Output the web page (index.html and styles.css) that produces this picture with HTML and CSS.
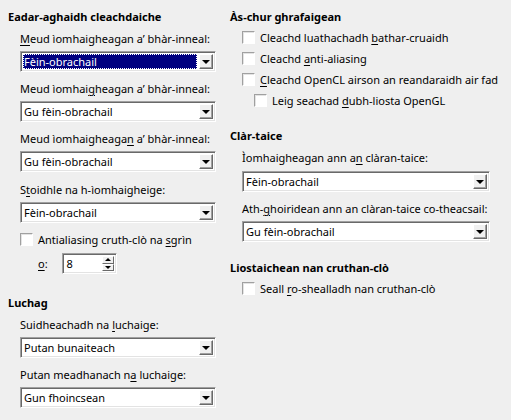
FILE: index.html
```html
<!DOCTYPE html>
<html>
<head>
<meta charset="utf-8">
<link rel="stylesheet" href="styles.css">
</head>
<body>
<div class="page">
  <div class="col col-left">
    <section class="group">
      <h3 class="heading">Eadar-aghaidh cleachdaiche</h3>
      <div class="body">
        <div class="label"><u>M</u>eud ìomhaigheagan a’ bhàr-inneal:</div>
        <div class="combo focused"><span class="value"><span class="sel">Fèin-obrachail</span></span><span class="btn"><span class="arrow"></span></span></div>
        <div class="label">Meud ìomhai<u>g</u>heagan a’ bhàr-inneal:</div>
        <div class="combo"><span class="value">Gu fèin-obrachail</span><span class="btn"><span class="arrow"></span></span></div>
        <div class="label">Meud ìomhaigheaga<u>n</u> a’ bhàr-inneal:</div>
        <div class="combo"><span class="value">Gu fèin-obrachail</span><span class="btn"><span class="arrow"></span></span></div>
        <div class="label style-label">S<u>t</u>oidhle na h-ìomhaigheige:</div>
        <div class="combo"><span class="value">Fèin-obrachail</span><span class="btn"><span class="arrow"></span></span></div>
        <div class="check"><span class="box"></span><span>Antialiasing cruth-clò na <u>s</u>grìn</span></div>
        <div class="spinrow">
          <span class="spinlabel"><u>o</u>:</span>
          <div class="spin"><span class="value">8</span><span class="spinbtns"><span class="sbtn"><span class="up"></span></span><span class="sbtn"><span class="down"></span></span></span></div>
        </div>
      </div>
    </section>
    <section class="group mouse">
      <h3 class="heading">Luchag</h3>
      <div class="body">
        <div class="label">Suidheachadh na <u>l</u>uchaige:</div>
        <div class="combo"><span class="value">Putan bunaiteach</span><span class="btn"><span class="arrow"></span></span></div>
        <div class="label">Putan meadhanach n<u>a</u> luchaige:</div>
        <div class="combo"><span class="value">Gun fhoincsean</span><span class="btn"><span class="arrow"></span></span></div>
      </div>
    </section>
  </div>
  <div class="col col-right">
    <section class="group">
      <h3 class="heading">Às-chur ghrafaigean</h3>
      <div class="body">
        <div class="check"><span class="box"></span><span>Cleachd luathachadh <u>b</u>athar-cruaidh</span></div>
        <div class="check"><span class="box"></span><span>Cleachd <u>a</u>nti-aliasing</span></div>
        <div class="check"><span class="box"></span><span><u>C</u>leachd OpenCL airson an reandaraidh air fad</span></div>
        <div class="check sub"><span class="box"></span><span>Leig seachad <u>d</u>ubh-liosta OpenGL</span></div>
      </div>
    </section>
    <section class="group clip">
      <h3 class="heading">Clàr-taice</h3>
      <div class="body">
        <div class="label">Ìomhaigheagan ann a<u>n</u> clàran-taice:</div>
        <div class="combo wide"><span class="value">Fèin-obrachail</span><span class="btn"><span class="arrow"></span></span></div>
        <div class="label">Ath-<u>g</u>hoiridean ann an clàran-taice co-theacsail:</div>
        <div class="combo wide"><span class="value">Gu fèin-obrachail</span><span class="btn"><span class="arrow"></span></span></div>
      </div>
    </section>
    <section class="group fonts">
      <h3 class="heading">Liostaichean nan cruthan-clò</h3>
      <div class="body">
        <div class="check"><span class="box"></span><span>Seall <u>r</u>o-shealladh nan cruthan-clò</span></div>
      </div>
    </section>
  </div>
</div>
</body>
</html>
```

FILE: styles.css
```css
html, body {
  margin: 0;
  padding: 0;
  background: #efefef;
}
body {
  font-family: "Noto Sans", "Open Sans", sans-serif;
  font-size: 11px;
  color: #000;
  width: 511px;
  height: 420px;
  overflow: hidden;
}
u { text-decoration: underline; text-underline-offset: 2px; }
.page {
  display: flex;
  padding: 8px 8px 0 8px;
  gap: 10px;
}
.col-left { width: 212px; }
.col-right { flex: 1; }
.heading {
  margin: 0;
  font-size: 11px;
  font-weight: bold;
  line-height: 18px;
  height: 18px;
}
.body {
  padding-left: 12px;
  display: flex;
  flex-direction: column;
}
.label {
  line-height: 18px;
  margin-top: 4px;
  margin-bottom: 3px;
  white-space: nowrap;
}
.combo + .label { margin-top: 8px; }
.combo + .label.style-label { margin-top: 9px; }
.combo {
  display: flex;
  height: 21px;
  box-sizing: border-box;
  background: #fff;
  border-top: 1px solid #a0a0a0;
  border-left: 1px solid #a0a0a0;
  border-bottom: 1px solid #fff;
  border-right: 1px solid #fff;
  box-shadow: inset 1px 1px 0 #696969, inset -1px -1px 0 #e3e3e3;
  padding: 2px;
  width: 196px;
}
.combo.wide { width: 248px; }
.combo .value {
  flex: 1;
  line-height: 15px;
  padding-left: 1px;
  white-space: nowrap;
  overflow: hidden;
}
.combo.focused .value {
  background: #000080;
  color: #fff;
  outline: 1px dotted #fff;
  outline-offset: -1px;
  margin-right: 2px;
}
.btn {
  width: 14px;
  height: 15px;
  box-sizing: border-box;
  background: #f0f0f0;
  border-top: 1px solid #fff;
  border-left: 1px solid #fff;
  border-right: 1px solid #696969;
  border-bottom: 1px solid #696969;
  box-shadow: inset -1px -1px 0 #a0a0a0;
  display: flex;
  align-items: center;
  justify-content: center;
}
.arrow {
  width: 0;
  height: 0;
  border-left: 4px solid transparent;
  border-right: 4px solid transparent;
  border-top: 4px solid #000;
}
.check {
  display: flex;
  align-items: center;
  gap: 5px;
  height: 21px;
  white-space: nowrap;
}
.check .box {
  width: 13px;
  height: 13px;
  box-sizing: border-box;
  background: #fff;
  border-top: 1px solid #a0a0a0;
  border-left: 1px solid #a0a0a0;
  border-bottom: 1px solid #fff;
  border-right: 1px solid #fff;
  box-shadow: inset 1px 1px 0 #e3e3e3;
}
.check.sub { padding-left: 12px; }
.col-left .check { margin-top: 6px; }
.spinrow {
  display: flex;
  align-items: center;
  padding-left: 18px;
  gap: 14px;
  margin-top: 3px;
}
.spin {
  display: flex;
  width: 55px;
  height: 21px;
  box-sizing: border-box;
  background: #fff;
  border-top: 1px solid #a0a0a0;
  border-left: 1px solid #a0a0a0;
  border-bottom: 1px solid #fff;
  border-right: 1px solid #fff;
  box-shadow: inset 1px 1px 0 #696969, inset -1px -1px 0 #e3e3e3;
  padding: 2px;
}
.spin .value { flex: 1; line-height: 15px; padding-left: 2px; }
.spinbtns { display: flex; flex-direction: column; width: 12px; }
.sbtn {
  flex: 1;
  box-sizing: border-box;
  background: #f0f0f0;
  border-top: 1px solid #fff;
  border-left: 1px solid #fff;
  border-right: 1px solid #696969;
  border-bottom: 1px solid #696969;
  display: flex;
  align-items: center;
  justify-content: center;
}
.up {
  width: 0; height: 0;
  border-left: 3px solid transparent;
  border-right: 3px solid transparent;
  border-bottom: 3px solid #000;
}
.down {
  width: 0; height: 0;
  border-left: 3px solid transparent;
  border-right: 3px solid transparent;
  border-top: 3px solid #000;
}
.mouse { margin-top: 20px; }
.mouse .combo { margin-bottom: 0; }
.col-right .check { margin-top: 0; }
.col-right .body > .check:first-child { margin-top: 1px; }
.clip { margin-top: 16px; }
.clip .label:first-child { margin-bottom: 4px; }
.fonts { margin-top: 17px; }
```
